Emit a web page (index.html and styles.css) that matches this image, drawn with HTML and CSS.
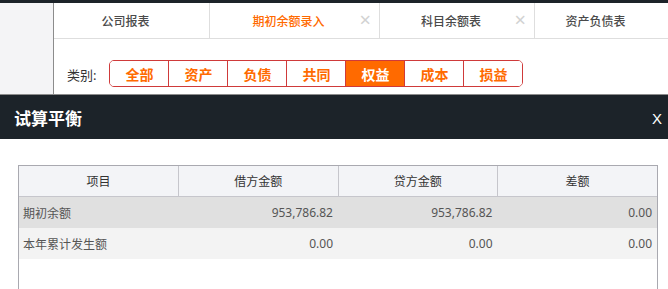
FILE: index.html
```html
<!DOCTYPE html>
<html lang="zh-CN">
<head>
    <meta charset="UTF-8">
    <meta name="viewport" content="width=device-width, initial-scale=1.0">
    <title>试算平衡</title>
    <link rel="stylesheet" href="styles.css">
</head>
<body>
    <div class="topbar"></div>

    <div class="page">
        <div class="sidebar"></div>
        <div class="main">
            <div class="tabs">
                <div class="tab tab-1">公司报表</div>
                <div class="tab tab-2 active">期初余额录入<span class="tab-close">×</span></div>
                <div class="tab tab-3">科目余额表<span class="tab-close">×</span></div>
                <div class="tab tab-4">资产负债表</div>
            </div>

            <div class="filter">
                <span class="filter-label">类别:</span>
                <div class="btn-group">
                    <button class="cat-btn">全部</button>
                    <button class="cat-btn">资产</button>
                    <button class="cat-btn">负债</button>
                    <button class="cat-btn">共同</button>
                    <button class="cat-btn active">权益</button>
                    <button class="cat-btn">成本</button>
                    <button class="cat-btn">损益</button>
                </div>
            </div>
        </div>
    </div>

    <!-- Trial balance dialog -->
    <div class="dialog">
        <div class="dialog-header">
            <span class="dialog-title">试算平衡</span>
            <span class="dialog-close">X</span>
        </div>
        <div class="dialog-body">
            <div class="grid">
                <table>
                    <thead>
                        <tr>
                            <th>项目</th>
                            <th>借方金额</th>
                            <th>贷方金额</th>
                            <th>差额</th>
                        </tr>
                    </thead>
                    <tbody>
                        <tr class="row-odd">
                            <td>期初余额</td>
                            <td class="num">953,786.82</td>
                            <td class="num">953,786.82</td>
                            <td class="num">0.00</td>
                        </tr>
                        <tr class="row-even">
                            <td>本年累计发生额</td>
                            <td class="num">0.00</td>
                            <td class="num">0.00</td>
                            <td class="num">0.00</td>
                        </tr>
                    </tbody>
                </table>
            </div>
        </div>
    </div>
</body>
</html>
```

FILE: styles.css
```css
body {
    margin: 0;
    font-family: "Noto Sans", "Noto Sans CJK SC", sans-serif;
    font-size: 12px;
    color: #333;
    background-color: #fff;
    overflow: hidden;
}

.topbar {
    height: 3px;
    background-color: #1c2329;
}

/* Page behind the dialog */
.page {
    display: flex;
    height: 91px;
}

.sidebar {
    width: 53px;
    background-color: #f4f4f6;
    border-right: 1px solid #8c8c8c;
}

.main {
    flex: 1;
}

/* Tabs */
.tabs {
    display: flex;
    height: 35px;
    border-bottom: 1px solid #dedede;
}

.tab {
    position: relative;
    display: flex;
    align-items: center;
    justify-content: center;
    padding-right: 12px;
    box-sizing: border-box;
    border-right: 1px solid #dedede;
    font-size: 12px;
    font-weight: 500;
    color: #4a4a4a;
}

.tab-1 { width: 156px; }
.tab-2 { width: 170px; }
.tab-3 { width: 155px; }
.tab-4 { flex: 1; border-right: none; }

.tab.active {
    color: #ff6a00;
}

.tab-close {
    position: absolute;
    right: 8px;
    top: 7px;
    font-size: 20px;
    font-weight: normal;
    line-height: 20px;
    color: #d2d2d2;
}

/* Category filter */
.filter {
    display: flex;
    align-items: center;
    padding: 21px 0 0 13px;
}

.filter-label {
    font-size: 13px;
    color: #333;
    margin-right: 13px;
    padding-top: 2px;
}

.btn-group {
    display: flex;
    border: 1px solid #cf3a3a;
    border-radius: 5px;
    overflow: hidden;
}

.cat-btn {
    width: 59px;
    height: 25px;
    padding: 0;
    border: none;
    border-left: 1px solid #cf3a3a;
    background-color: #fff;
    color: #ff6a00;
    font-family: "Noto Sans", "Noto Sans CJK SC", sans-serif;
    font-size: 14px;
    font-weight: bold;
    cursor: pointer;
}

.cat-btn:first-child {
    border-left: none;
    width: 58px;
}

.cat-btn.active {
    background-color: #ff6a00;
    color: #fff;
}

/* Dialog */
.dialog {
    border-top: 1px solid #8c8c8c;
}

.dialog-header {
    display: flex;
    justify-content: space-between;
    align-items: center;
    height: 44px;
    padding: 0 6px 0 14px;
    background-color: #1c2329;
    color: #fff;
}

.dialog-title {
    font-size: 17px;
    font-weight: bold;
}

.dialog-close {
    font-family: "Liberation Sans", sans-serif;
    font-size: 15px;
    padding-top: 3px;
}

.dialog-body {
    padding: 26px 10px 0 18px;
}

/* Grid */
.grid {
    border: 1px solid #a9a9b0;
    border-bottom: none;
    height: 123px;
}

table {
    width: 100%;
    border-collapse: collapse;
    table-layout: fixed;
}

th {
    height: 28px;
    font-weight: normal;
    background-color: #f3f4f7;
    border-bottom: 1px solid #c6c6cc;
    border-left: 1px solid #c6c6cc;
    color: #333;
}

th:first-child {
    border-left: none;
}

td {
    height: 31px;
    padding: 0 4px;
    color: #555;
}

td.num {
    text-align: right;
    padding-right: 5px;
}

.row-odd {
    background-color: #e0e0e0;
}

.row-even {
    background-color: #f3f3f3;
}
```
